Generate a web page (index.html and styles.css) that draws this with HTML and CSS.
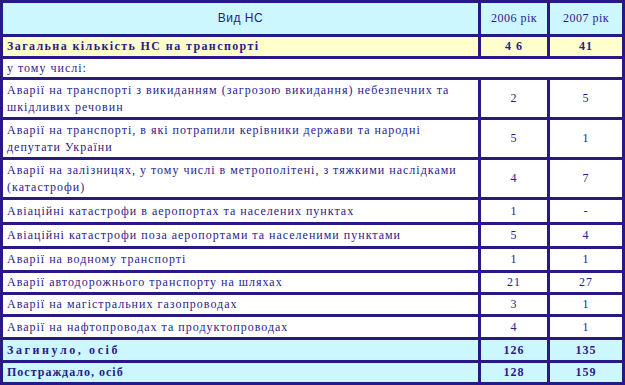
FILE: index.html
```html
<!DOCTYPE html>
<html lang="uk">
<head>
<meta charset="utf-8">
<link rel="stylesheet" href="styles.css">
</head>
<body>
<table class="ns">
  <colgroup>
    <col class="c1"><col class="c2"><col class="c3">
  </colgroup>
  <tr class="head h34">
    <td class="center sans">Вид НС</td>
    <td class="num">2006 рік</td>
    <td class="num">2007 рік</td>
  </tr>
  <tr class="total h22">
    <td class="b wide">Загальна кількість НС на транспорті</td>
    <td class="num b">4 6</td>
    <td class="num b">41</td>
  </tr>
  <tr class="h21">
    <td colspan="3">у тому числі:</td>
  </tr>
  <tr class="h40">
    <td>Аварії на транспорті з викиданням (загрозою викидання) небезпечних та шкідливих речовин</td>
    <td class="num">2</td>
    <td class="num">5</td>
  </tr>
  <tr class="h40">
    <td>Аварії на транспорті, в які потрапили керівники держави та народні депутати України</td>
    <td class="num">5</td>
    <td class="num">1</td>
  </tr>
  <tr class="h40">
    <td>Аварії на залізницях, у тому числі в метрополітені, з тяжкими наслідками (катастрофи)</td>
    <td class="num">4</td>
    <td class="num">7</td>
  </tr>
  <tr class="h25">
    <td>Авіаційні катастрофи в аеропортах та населених пунктах</td>
    <td class="num">1</td>
    <td class="num">-</td>
  </tr>
  <tr class="h24">
    <td>Авіаційні катастрофи поза аеропортами та населеними пунктами</td>
    <td class="num">5</td>
    <td class="num">4</td>
  </tr>
  <tr class="h24">
    <td>Аварії на водному транспорті</td>
    <td class="num">1</td>
    <td class="num">1</td>
  </tr>
  <tr class="h22">
    <td>Аварії автодорожнього транспорту на шляхах</td>
    <td class="num">21</td>
    <td class="num">27</td>
  </tr>
  <tr class="h22">
    <td>Аварії на магістральних газопроводах</td>
    <td class="num">3</td>
    <td class="num">1</td>
  </tr>
  <tr class="h23">
    <td>Аварії на нафтопроводах та продуктопроводах</td>
    <td class="num">4</td>
    <td class="num">1</td>
  </tr>
  <tr class="foot h23">
    <td class="b wider">Загинуло, осіб</td>
    <td class="num b">126</td>
    <td class="num b">135</td>
  </tr>
  <tr class="foot h22">
    <td class="b">Постраждало, осіб</td>
    <td class="num b">128</td>
    <td class="num b">159</td>
  </tr>
</table>
</body>
</html>
```
FILE: styles.css
```css
html, body {
  margin: 0;
  padding: 0;
  background: #ffffff;
}
.ns {
  width: 625px;
  table-layout: fixed;
  border-collapse: separate;
  border-spacing: 0;
  border-left: 3px solid #2a1884;
  border-top: 3px solid #2a1884;
  font-family: "Liberation Serif", "DejaVu Serif", serif;
  font-size: 12px;
  letter-spacing: 1px;
  color: #2b1a8c;
}
.c1 { width: 478px; }
.c2 { width: 69px; }
.c3 { width: 75px; }
.ns td {
  box-sizing: border-box;
  border-right: 3px solid #2a1884;
  border-bottom: 3px solid #2a1884;
  padding: 0 4px 0 4px;
  line-height: 17px;
  vertical-align: middle;
  text-align: left;
}
.ns td.num, .ns td.center { text-align: center; }
.head td { background: #ccf7ff; letter-spacing: 0.5px; }
.total td { background: #ffffcc; }
.foot td { background: #ccf7ff; }
.b { font-weight: bold; }
.ns td.wide { letter-spacing: 1.4px; }
.ns td.wider { letter-spacing: 2.6px; }
.sans { font-family: "Liberation Sans", Arial, sans-serif; letter-spacing: 0; }
.h34 td { height: 34px; }
.h25 td { height: 25px; }
.h24 td { height: 24px; }
.h23 td { height: 23px; }
.h22 td { height: 22px; }
.h21 td { height: 21px; }
.h40 td { height: 40px; }
```
